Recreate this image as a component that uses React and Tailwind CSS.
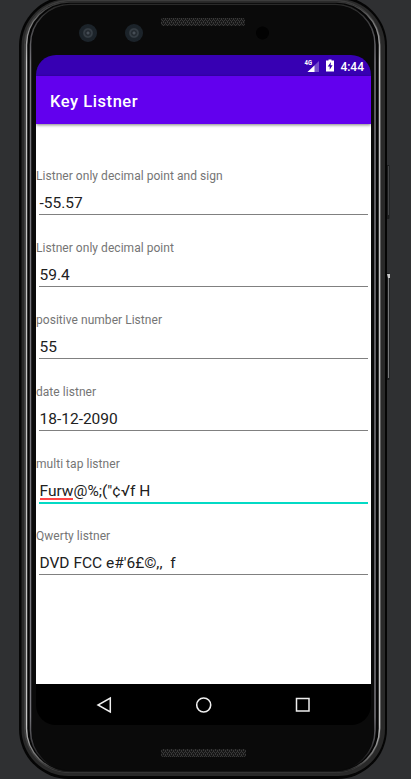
const fields = [
  { label: "Listner only decimal point and sign", value: "-55.57" },
  { label: "Listner only decimal point", value: "59.4" },
  { label: "positive number Listner", value: "55" },
  { label: "date listner", value: "18-12-2090" },
  { label: "multi tap listner", misspelled: "Furw", value: "@%;(\"¢√f H", focused: true },
  { label: "Qwerty listner", value: "DVD FCC e#'6£©,,  f" },
];

// Metal shell of the handset: edges, highlights, side buttons, cameras and grilles.
function DeviceShell() {
  return (
    <svg className="absolute inset-0" width="411" height="779" viewBox="0 0 411 779" fill="none">
      <defs>
        <linearGradient id="rim" x1="0" y1="0" x2="0" y2="779" gradientUnits="userSpaceOnUse">
          <stop offset="0" stopColor="#2a2a2a" />
          <stop offset="0.03" stopColor="#777" />
          <stop offset="0.08" stopColor="#c4c4c4" />
          <stop offset="0.93" stopColor="#c4c4c4" />
          <stop offset="0.975" stopColor="#666" />
          <stop offset="0.99" stopColor="#1c1c1c" />
        </linearGradient>
        <linearGradient id="inner" x1="0" y1="0" x2="0" y2="779" gradientUnits="userSpaceOnUse">
          <stop offset="0.01" stopColor="#2a2a2a" />
          <stop offset="0.08" stopColor="#77767c" />
          <stop offset="0.92" stopColor="#77767c" />
          <stop offset="0.985" stopColor="#0a0a0a" />
        </linearGradient>
        <pattern id="mesh" width="4" height="4" patternUnits="userSpaceOnUse">
          <rect width="4" height="4" fill="#171717" />
          <path d="M0 0h1v1H0zM2 0h1v1H2zM1 2h1v2H1zM3 1h1v2H3z" fill="#383838" />
        </pattern>
        <radialGradient id="lens">
          <stop offset="0" stopColor="#59616a" />
          <stop offset="0.25" stopColor="#20262c" />
          <stop offset="0.45" stopColor="#3a4249" />
          <stop offset="0.6" stopColor="#1c2329" />
          <stop offset="1" stopColor="#1b232a" />
        </radialGradient>
      </defs>
      <rect x="385" y="165" width="4.5" height="54" rx="1" fill="#1b1c1d" />
      <path d="M388.5 166v49" stroke="#444547" />
      <rect x="385" y="273" width="4.5" height="107" rx="1" fill="#1b1c1d" />
      <path d="M388.5 275v103" stroke="#77787a" />
      <path d="M387 274h3v4h-2z" fill="#c9c9c9" />
      <rect x="19" y="-4" width="368" height="783" rx="50" fill="#050505" />
      <rect x="21.5" y="-1" width="363.5" height="777" rx="47" fill="#292929" />
      <rect x="24" y="0" width="357" height="773" rx="45" fill="#3d3d3d" />
      <rect x="25.5" y="1.5" width="354.5" height="770.5" rx="44" fill="#050505" />
      <rect x="26.5" y="2" width="353" height="769.5" rx="43" stroke="url(#rim)" strokeWidth="1.5" />
      <rect x="30.5" y="4.5" width="344.5" height="766" rx="40" fill="#0a0a0a" stroke="url(#inner)" strokeWidth="1.5" />
      <rect x="32" y="5" width="341.5" height="765.5" rx="39" fill="#0a0a0a" />
      <rect x="161" y="18" width="84" height="8" rx="2" fill="url(#mesh)" />
      <rect x="161" y="749" width="85" height="8" rx="2" fill="url(#mesh)" />
      <circle cx="88" cy="33" r="9" fill="url(#lens)" />
      <circle cx="134" cy="33" r="9" fill="url(#lens)" />
      <circle cx="262.5" cy="33" r="6.5" fill="#020202" />
    </svg>
  );
}

function StatusBar() {
  return (
    <div className="flex h-[21px] items-center justify-end bg-[#3700b3] pt-px pr-[7px] text-white">
      <svg className="mr-[6px]" width="16" height="14" viewBox="0 0 16 14">
        <path d="M15 2v11H3.5z" fill="#fff" fillOpacity="0.3" />
        <path d="M10.5 6.5V13H3.5z" fill="#fff" />
        <text x="0.5" y="6" fontSize="7" fontWeight="700" fontFamily="Roboto, sans-serif" fill="#fff" textLength="7.5" lengthAdjust="spacingAndGlyphs">4G</text>
      </svg>
      <svg className="mr-[6px]" width="8" height="14" viewBox="0 0 8 14">
        <path d="M2.5 0.5h3v1H8v11H0v-11h2.5z" fill="#fff" />
        <path d="M5 3 1.7 7.5h2v3.3L6.6 6.2H4.6z" fill="#3700b3" />
      </svg>
      <span className="pt-px text-[12px] leading-none font-medium">4:44</span>
    </div>
  );
}

function Field({ label, value, misspelled, focused }) {
  return (
    <div className="h-[72px]">
      <div className="h-[17px] text-[12px] leading-[17px] tracking-[0.04px] whitespace-nowrap text-[#757575]">{label}</div>
      <div
        className={
          focused
            ? "mx-[3px] flex h-[31px] border-b-2 border-[#03dac5] pt-[8px] pl-[0.5px] text-[15.5px] leading-[20px] whitespace-pre text-[#212121]"
            : "mx-[3px] flex h-[30px] border-b border-[#808080] pt-[8px] pl-[0.5px] text-[15.5px] leading-[20px] whitespace-pre text-[#212121]"
        }
      >
        {misspelled && (
          <span className="flex flex-col">
            <span className="h-[17px]">{misspelled}</span>
            <span className="h-[1.5px] bg-[#ff4545]" />
          </span>
        )}
        <span>{value}</span>
      </div>
    </div>
  );
}

function NavBar() {
  return (
    <div className="flex h-[41px] items-center justify-between bg-black px-[60px]">
      <svg width="16" height="18" viewBox="0 0 16 18" fill="none" stroke="#eee" strokeWidth="1.5">
        <path d="M14.3 2v14L2 9z" />
      </svg>
      <svg width="18" height="18" viewBox="0 0 18 18" fill="none" stroke="#eee" strokeWidth="1.6">
        <circle cx="8.7" cy="9" r="7" />
      </svg>
      <svg width="16" height="18" viewBox="0 0 16 18" fill="none" stroke="#eee" strokeWidth="1.5">
        <rect x="1.5" y="2.5" width="12.5" height="12.5" />
      </svg>
    </div>
  );
}

export default function App() {
  return (
    <div className="relative h-[779px] w-[411px] overflow-hidden bg-[#2f3032] pt-[55px] pl-[36px] font-[Roboto,sans-serif]">
      <DeviceShell />
      <div className="relative flex h-[670px] w-[335px] flex-col overflow-hidden rounded-[20px]">
        <StatusBar />
        <header className="relative flex h-[48px] items-center bg-[#6200ee] pl-[14px] text-[16.5px] font-medium tracking-[0.55px] text-white shadow-[0_1px_3px_rgba(0,0,0,0.5)]">
          <h1 className="pt-[4px]">Key Listner</h1>
        </header>
        <main className="flex-1 bg-white pt-[44px]">
          {fields.map((field) => (
            <Field key={field.label} {...field} />
          ))}
        </main>
        <NavBar />
      </div>
    </div>
  );
}
